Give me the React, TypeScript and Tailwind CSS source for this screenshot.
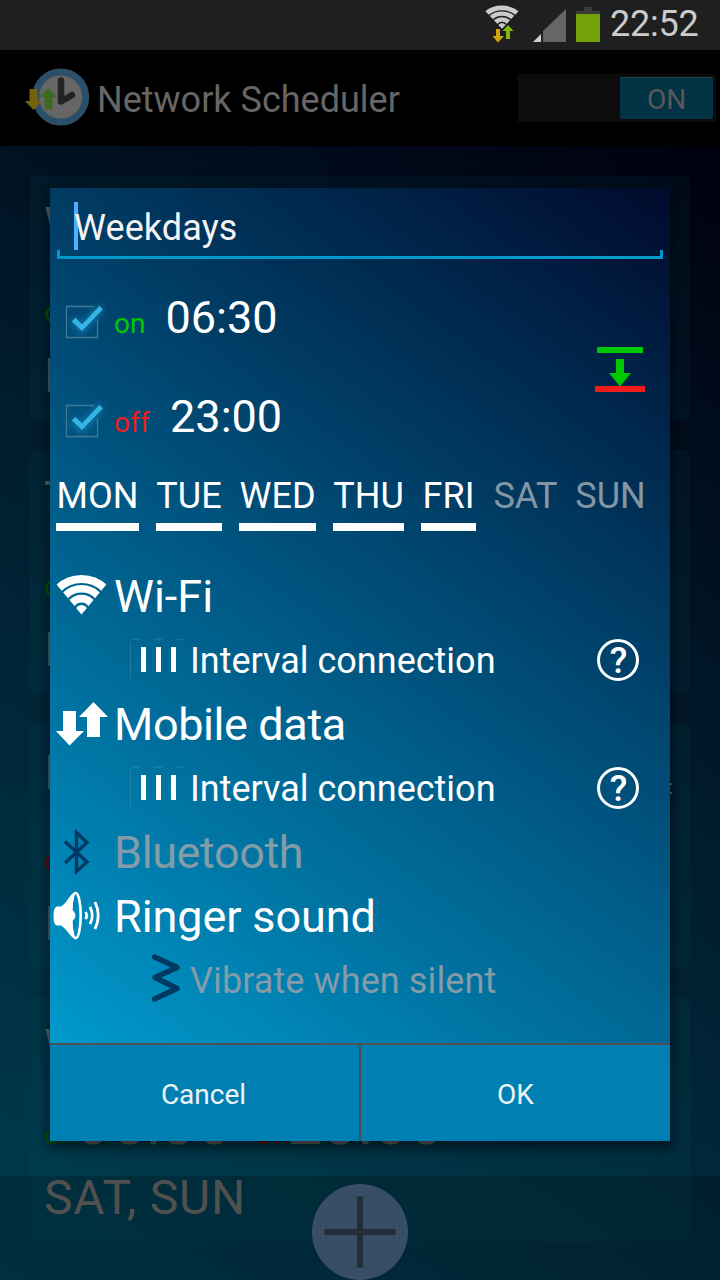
import type { ReactNode } from "react";

function WifiIcon({ className, id }: { className: string; id: string }) {
  return (
    <svg viewBox="0 0 50 41" preserveAspectRatio="none" className={className} fill="none" stroke="currentColor">
      <clipPath id={id}>
        <path d="M25 40.5L-7 1V-6H57V1Z" />
      </clipPath>
      <g clipPath={`url(#${id})`}>
        <circle cx="25" cy="37" r="32" strokeWidth="8" />
        <circle cx="25" cy="37" r="22.2" strokeWidth="7.4" />
        <circle cx="25" cy="37" r="12.3" strokeWidth="7.8" />
        <circle cx="25" cy="37" r="6" fill="currentColor" stroke="none" />
      </g>
    </svg>
  );
}

function StatusBar() {
  return (
    <div className="flex h-[50px] items-center bg-[#1f1f1f] pl-[485px] text-[#cbcbcb]">
      <div className="relative h-full w-[34px] shrink-0">
        <WifiIcon id="status-fan" className="absolute left-0 top-[5px] h-[24px] w-[34px]" />
        <svg viewBox="0 0 34 50" className="absolute inset-0 h-full w-full">
          <path d="M11 29h4v7h4l-6 6.500-5.500-6.500H11z" fill="#d1a50d" />
          <path d="M21 39v-8h-3.500L23 25l5.500 6H25v8z" fill="#80b80c" />
        </svg>
      </div>
      <svg viewBox="0 0 67 50" className="ml-[14px] h-[50px] w-[67px] shrink-0">
        <path d="M0 42L8 34V42Z" fill="#cfcfcf" />
        <path d="M10 42V31L33 9V42Z" fill="#666" />
        <path d="M43 14V11H51V7H59V11H67V14Z" fill="#3a3a3a" />
        <path d="M43 14H67V42H43Z" fill="#73a208" />
      </svg>
      <span className="mb-[2px] ml-[10px] text-[36px] leading-[46px] tracking-[-0.2px]">22:52</span>
    </div>
  );
}

function TitleBar() {
  return (
    <div className="flex h-24 items-center bg-black">
      <svg viewBox="0 0 66 60" className="ml-[25px] h-[60px] w-[66px] shrink-0">
        <circle cx="35.700" cy="29" r="25" fill="#666" stroke="#2c4f69" strokeWidth="7" />
        <path d="M36 12.500V33.500L47 27" fill="none" stroke="#232323" strokeWidth="6.500" strokeLinecap="round" strokeLinejoin="round" />
        <path d="M4.500 21h8v12H17L8.500 42 0 33h4.500z" fill="#75620c" />
        <path d="M19.500 41.500V29h-5.500L23.500 20.500 32 29h-4.500v12.500z" fill="#3c6a20" />
      </svg>
      <span className="ml-[6px] pt-1 text-[36px] leading-[48px] text-[#666]">Network Scheduler</span>
      <div className="ml-auto mr-1 flex h-12 w-[198px] items-center justify-end bg-[#0c0c0c] pr-[3px]">
        <div className="flex h-[42px] w-[93px] items-center justify-center rounded-xs border-t border-[#1c4452] bg-[#023344] pt-[2px] text-[28px] text-[#585858]">
          ON
        </div>
      </div>
    </div>
  );
}

function Card({ title, mode, time, days }: { title: string; mode: ReactNode; time?: ReactNode; days: string }) {
  return (
    <div className="flex h-[244px] shrink-0 flex-col rounded-md bg-[#0060701a] pl-[14px] pt-[20px] text-[48px] leading-[58px] text-[#646464]">
      <div>{title}</div>
      <div className="flex h-[95px] items-end pb-[18px] text-[28px] leading-[36px]">
        {mode}
        {time}
      </div>
      <div className="leading-[54px] tracking-[0.8px]">{days}</div>
    </div>
  );
}

function Background() {
  return (
    <div className="relative h-[1134px] overflow-hidden bg-[linear-gradient(32.400deg,#003b50_0%,#002031_50%,#00000f_100%)]">
      <div className="flex flex-col gap-[30px] px-[30px] pt-[30px]">
        <Card title="W" mode={<span className="text-[#005800]">o</span>} days="M" />
        <Card title="T" mode={<span className="text-[#005800]">o</span>} days="M" />
        <Card title="N" mode={<span className="text-[#6e0a0a]">o</span>} days="M" />
        <Card
          title="W"
          mode={<span className="w-[31px] text-[#005800]">on</span>}
          time={
            <>
              <span className="w-[181px] text-[63px] leading-[60px]">05:30</span>
              <span className="w-[31px] text-[#6e0a0a]">off</span>
              <span className="text-[63px] leading-[60px]">23:00</span>
            </>
          }
          days="SAT, SUN"
        />
      </div>
      <div className="absolute inset-x-0 bottom-0 flex h-[104px] justify-center bg-black/20 pt-2">
        <svg viewBox="0 0 96 96" className="h-24 w-24">
          <circle cx="48" cy="48" r="48" fill="#384e66" />
          <path d="M12.500 48H83.500M48 12.500V83.500" stroke="#232d35" strokeWidth="6" />
        </svg>
      </div>
    </div>
  );
}

function Check() {
  return (
    <svg viewBox="0 0 48 48" className="h-12 w-12 shrink-0 overflow-visible">
      <path d="M36 8.500H8.500V39.500H39.500V22" fill="none" stroke="#4a7f9c" strokeWidth="1.300" />
      <path d="M36 8.500H8.500V39.500H39.500V22L30 15Z" fill="#00507c" opacity=".25" />
      <path d="M14.500 22.500L24 31L43 9" fill="none" stroke="#27a5dc" strokeWidth="9" opacity=".4" className="blur-[3px]" />
      <path d="M13.500 23.500L17.500 19.500L24 26L41.500 7.500L45 11.500L24 33.500Z" fill="#33b5e5" stroke="#0a5c86" strokeWidth=".7" />
    </svg>
  );
}

function TimeRow({ label, color, time, gap }: { label: string; color: string; time: string; gap: string }) {
  return (
    <div className="flex h-[99px] items-start">
      <Check />
      <div className="-mt-[7px] ml-2 flex items-baseline leading-[54px]">
        <span className={`text-[28px] ${color}`}>{label}</span>
        <span className={`text-[45px] text-white ${gap}`}>{time}</span>
      </div>
    </div>
  );
}

const days = [
  { name: "MON", on: true, width: "w-[83px]" },
  { name: "TUE", on: true, width: "w-[66px]" },
  { name: "WED", on: true, width: "w-[77px]" },
  { name: "THU", on: true, width: "w-[71px]" },
  { name: "FRI", on: true, width: "w-[55px]" },
  { name: "SAT", on: false, width: "w-[65px]" },
  { name: "SUN", on: false, width: "w-[71px]" },
];

function OptionRow({ icon, label, look = "text-white" }: { icon: ReactNode; label: string; look?: string }) {
  return (
    <div className="flex h-16 items-center">
      <div className="h-16 w-[64px] shrink-0">{icon}</div>
      <span className={`pt-[2px] text-[45px] ${look}`}>{label}</span>
    </div>
  );
}

function SubRow({ icon, label, look = "text-white", help }: { icon: ReactNode; label: string; look?: string; help?: boolean }) {
  return (
    <div className="flex h-16 items-center pl-[76px] pr-[31px]">
      <div className="h-16 w-[64px] shrink-0">{icon}</div>
      <span className={`pt-[2px] text-[36px] ${look}`}>{label}</span>
      {help && (
        <div className="ml-auto flex h-[42px] w-[42px] items-center justify-center rounded-full border-[3px] border-white pt-[2px] pl-px text-[36px] font-medium leading-[42px] text-white">
          ?
        </div>
      )}
    </div>
  );
}

function BarsIcon() {
  return (
    <svg viewBox="0 0 64 64" className="h-16 w-16">
      <path d="M15 19h5v25h-5zM30 19h5v25h-5zM45 19h5v25h-5z" fill="#fff" />
      <path d="M4.500 14V50M6 11.500q4-1 8 0M28 11.500q4-1 8 0M50 11.500q4-1 8 0" fill="none" stroke="#fff" opacity=".13" />
    </svg>
  );
}

function ArrowsIcon() {
  return (
    <svg viewBox="0 0 64 64" className="h-16 w-16" fill="#fff">
      <path d="M13 19h13v20h8L19.500 53.500 6 39h7z" />
      <path d="M37 45V25h-8L43.500 10 58 25h-8v20z" />
    </svg>
  );
}

function BluetoothIcon() {
  return (
    <svg viewBox="0 0 64 64" className="h-16 w-16" fill="none" stroke="#003a63" strokeWidth="3.400">
      <path d="M15 21.500L37 42L26.500 51.500V12.500L37 22.500L15 43" />
    </svg>
  );
}

function SpeakerIcon() {
  return (
    <svg viewBox="0 0 64 64" className="h-16 w-16" fill="none" stroke="#fff">
      <path d="M7 22.500H11C17 19 19 11 25.500 7.500C21.500 15 21.500 48 25.500 55.500C19 52 17 45 11 41.500H7Q3.500 41 3.500 32T7 22.500Z" fill="#fff" stroke="none" />
      <ellipse cx="25.700" cy="31.500" rx="5" ry="22.500" strokeWidth="2.600" />
      <path d="M22.500 26.500Q27.500 31.500 22.500 36.500Z" fill="#fff" />
      <path d="M35.500 28Q38 31.500 35.500 35M40 23Q44.500 31.500 40 40M45 18Q51.500 31.500 45 45" strokeWidth="2.800" />
    </svg>
  );
}

function VibrateIcon() {
  return (
    <svg viewBox="0 0 64 64" className="h-16 w-16">
      <path d="M28.500 9L51 19.500L29 29.500L51 40.500L28.500 51" fill="none" stroke="#003a63" strokeWidth="5.400" strokeLinecap="round" strokeLinejoin="round" />
    </svg>
  );
}

function Dialog() {
  return (
    <div className="relative flex h-[953px] w-[620px] flex-col shadow-[0_5px_12px_2px_rgba(0,0,0,0.55)]">
      <div className="flex h-[855px] flex-col bg-[linear-gradient(35.900deg,#0099cc_0%,#000a2c_100%)]">
        <div className="mx-[7px] flex h-[71px] flex-col">
          <div className="flex h-[62px] items-center pl-[17px] pt-[14px]">
            <div className="h-12 w-1 bg-[#4db0ff]" />
            <span className="-ml-1 pt-[4px] text-[36px] leading-[48px] tracking-[0.1px] text-[#f3f3f3]">Weekdays</span>
          </div>
          <div className="h-[9px] border-x-[3px] border-b-[3px] border-[#0099cc]" />
        </div>

        <div className="flex h-[207px] items-start pl-2 pt-[39px]">
          <div className="w-[530px]">
            <TimeRow label="on" color="text-[#00c800]" time="06:30" gap="ml-[20px]" />
            <TimeRow label="off" color="text-[#f01c1c] tracking-[0.2px]" time="23:00" gap="ml-[20px]" />
          </div>
          <svg viewBox="0 0 64 64" className="mt-10 h-16 w-16">
            <path d="M9 9h46v6H9zM28 21h8v14h7L32 48.500 21 35h7z" fill="#00c800" />
            <path d="M7 48h50v6H7z" fill="#f01c1c" />
          </svg>
        </div>

        <div className="flex h-[98px] gap-[17px] pl-[6px] pt-[7px] text-[36px] leading-[46px]">
          {days.map((d) => (
            <div key={d.name} className={d.width}>
              <div className={d.on ? "text-center text-white" : "text-center text-[#8496a3]"}>{d.name}</div>
              {d.on && <div className="mt-1 h-2 bg-white" />}
            </div>
          ))}
        </div>

        <OptionRow icon={<WifiIcon id="wifi-fan" className="ml-[6px] mt-[10px] h-[41px] w-[51px] text-white" />} label="Wi-Fi" />
        <SubRow icon={<BarsIcon />} label="Interval connection" help />
        <OptionRow icon={<ArrowsIcon />} label="Mobile data" look="text-white tracking-[-0.4px]" />
        <SubRow icon={<BarsIcon />} label="Interval connection" help />
        <OptionRow icon={<BluetoothIcon />} label="Bluetooth" look="text-[#839ca8] tracking-[-0.4px]" />
        <OptionRow icon={<SpeakerIcon />} label="Ringer sound" look="text-white tracking-[-0.1px]" />
        <SubRow icon={<VibrateIcon />} label="Vibrate when silent" look="text-[#839ca8] tracking-[0.1px]" />
      </div>
      <div className="flex h-[98px] border-t-2 border-[#4b5054] bg-[#0080b2] text-[28px] text-[#f0f4f6]">
        <button className="w-[311px] border-r-2 border-[#4b5054] pt-[4px] pr-[2px]">Cancel</button>
        <button className="flex-1 pt-[4px]">OK</button>
      </div>
    </div>
  );
}

export default function App() {
  return (
    <div className="relative h-[1280px] w-[720px] overflow-hidden bg-black font-['Roboto','Liberation_Sans',sans-serif] whitespace-nowrap">
      <StatusBar />
      <TitleBar />
      <Background />
      <div className="absolute inset-0 flex justify-center pt-[188px]">
        <Dialog />
        <div className="absolute left-[670px] top-[783px] h-[11px] w-[2px] border-y-2 border-[#4a4238]" />
      </div>
    </div>
  );
}
